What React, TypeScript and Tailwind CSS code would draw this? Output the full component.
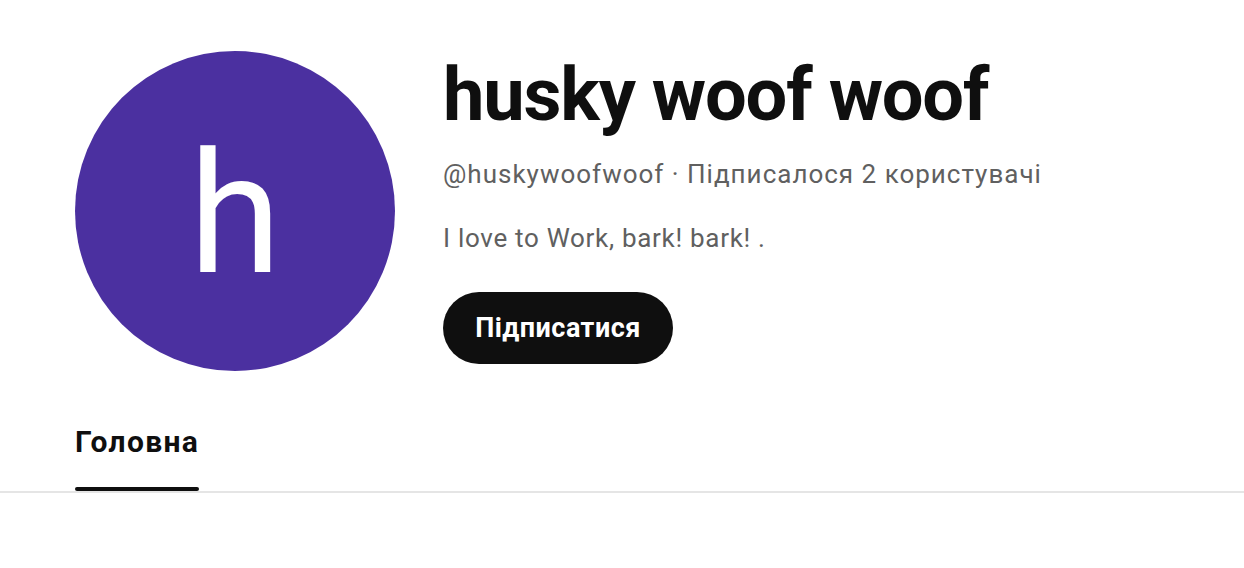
const font = { fontFamily: "Roboto, 'Noto Sans', sans-serif" };

function Avatar() {
  return (
    <div className="flex h-[320px] w-[320px] shrink-0 items-center justify-center rounded-full bg-[#4b30a0]">
      <span className="translate-y-[4px] text-[168px] font-normal leading-[168px] text-white">h</span>
    </div>
  );
}

export default function App() {
  return (
    <div className="min-h-[568px] w-full bg-white text-[#0f0f0f]" style={font}>
      <div className="flex gap-[48px] px-[75px] pt-[51px]">
        <Avatar />
        <div className="flex flex-col items-start pt-[5px]">
          <h1 className="text-[74px] font-bold leading-[77px] tracking-[-1.2px]">husky woof woof</h1>
          <p className="mt-[25px] text-[26px] leading-[32px] tracking-[1px] text-[#606060]">
            @huskywoofwoof · Підписалося 2 користувачі
          </p>
          <p className="mt-[32px] text-[26px] leading-[32px] tracking-[0.7px] text-[#606060]">
            I love to Work, bark! bark! .
          </p>
          <button className="mt-[38px] h-[72px] w-[230px] rounded-full bg-[#0f0f0f] text-[27px] font-bold tracking-[0.5px] text-white">
            Підписатися
          </button>
        </div>
      </div>
      <div className="mt-[51px] border-b-2 border-[#e5e5e5]">
        <div className="flex px-[75px]">
          <div className="flex flex-col">
            <span className="text-[30px] font-bold leading-[40px] tracking-[1.3px]">Головна</span>
            <span className="mt-[25px] h-[4px] w-full rounded-full bg-[#0f0f0f]" />
          </div>
        </div>
      </div>
    </div>
  );
}
